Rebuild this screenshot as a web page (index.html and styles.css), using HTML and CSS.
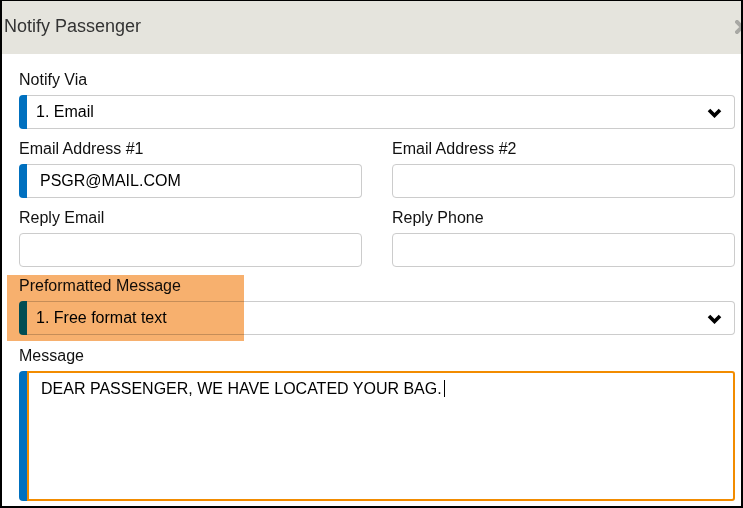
FILE: index.html
```html
<!DOCTYPE html>
<html>
<head>
<meta charset="utf-8">
<link rel="stylesheet" href="styles.css">
</head>
<body>
<div class="dialog">
  <div class="header">
    <span class="title">Notify Passenger</span>
    <span class="close"><svg width="14" height="14" viewBox="0 0 14 14"><path d="M2 2 L12 12 M12 2 L2 12" stroke="#a8a8a4" stroke-width="4" stroke-linecap="square"/></svg></span>
  </div>
  <div class="body">
    <div class="section">
      <div class="label">Notify Via</div>
      <div class="field">
        <div class="bar"></div>
        <div class="box select"><span class="val-sel">1. Email</span><svg class="chev" width="15" height="10" viewBox="0 0 15 10"><polyline points="2,2 7.5,7.5 13,2" fill="none" stroke="#000" stroke-width="3.6"/></svg></div>
      </div>
    </div>
    <div class="section grid">
      <div class="group">
        <div class="label">Email Address #1</div>
        <div class="field">
          <div class="bar"></div>
          <div class="box input"><span class="val">PSGR@MAIL.COM</span></div>
        </div>
      </div>
      <div class="group">
        <div class="label">Email Address #2</div>
        <div class="box plain"></div>
      </div>
      <div class="group">
        <div class="label">Reply Email</div>
        <div class="box plain"></div>
      </div>
      <div class="group">
        <div class="label">Reply Phone</div>
        <div class="box plain"></div>
      </div>
    </div>
    <div class="section pre">
      <div class="label">Preformatted Message</div>
      <div class="field">
        <div class="bar"></div>
        <div class="box select"><span class="val-sel">1. Free format text</span><svg class="chev" width="15" height="10" viewBox="0 0 15 10"><polyline points="2,2 7.5,7.5 13,2" fill="none" stroke="#000" stroke-width="3.6"/></svg></div>
      </div>
    </div>
    <div class="section msg">
      <div class="label">Message</div>
      <div class="field tall">
        <div class="bar"></div>
        <div class="box textarea">DEAR PASSENGER, WE HAVE LOCATED YOUR BAG.<span class="caret"></span></div>
      </div>
    </div>
  </div>
  <div class="highlight"></div>
</div>
</body>
</html>
```

FILE: styles.css
```css
html, body {
  margin: 0;
  padding: 0;
  background: #fff;
}
.dialog {
  position: relative;
  width: 743px;
  height: 508px;
  box-sizing: border-box;
  border-top: 1px solid #000;
  border-left: 2px solid #000;
  border-right: 2px solid #000;
  border-bottom: 2px solid #000;
  overflow: hidden;
  font-family: "Liberation Sans", Arial, sans-serif;
  color: #111;
}
.header {
  height: 53px;
  box-sizing: border-box;
  padding: 0 0 3px 2px;
  background: #e5e4dd;
  display: flex;
  align-items: center;
  justify-content: space-between;
}
.title {
  font-size: 18px;
  color: #333;
}
.close {
  display: flex;
  margin-right: -8px;
  margin-top: 2px;
}
.body {
  padding: 17px 6px 0 17px;
}
.section + .section {
  margin-top: 11px;
}
.section.pre {
  margin-top: 10px;
}
.section.msg {
  margin-top: 12px;
}
.grid {
  display: grid;
  grid-template-columns: 343px 343px;
  column-gap: 30px;
  row-gap: 11px;
}
.label {
  font-size: 16px;
  line-height: 18px;
  margin-bottom: 6px;
}
.field {
  display: flex;
  height: 34px;
}
.field.tall {
  height: 130px;
}
.bar {
  width: 8px;
  flex: none;
  background: #0070bf;
  border-radius: 4px 0 0 4px;
}
.box {
  box-sizing: border-box;
  font-size: 16px;
  color: #000;
}
.select, .input {
  flex: 1;
  border: 1px solid #ccc;
  border-left: 0;
  border-radius: 0 4px 4px 0;
  display: flex;
  align-items: center;
}
.select {
  justify-content: space-between;
  padding: 0 12px 0 9px;
}
.input {
  padding: 0 0 0 13px;
}
.plain {
  height: 34px;
  border: 1px solid #ccc;
  border-radius: 4px;
}
.textarea {
  flex: 1;
  border: 2px solid #f28c00;
  border-radius: 0 3px 3px 0;
  padding: 7px 12px;
  line-height: 18px;
}
.caret {
  display: inline-block;
  width: 1px;
  height: 17px;
  background: #000;
  margin-left: 2px;
  vertical-align: -3px;
}
.chev {
  display: block;
  margin-top: 1px;
}
.highlight {
  position: absolute;
  left: 5px;
  top: 274px;
  width: 237px;
  height: 66px;
  background: #f7b06e;
  mix-blend-mode: multiply;
}
```
